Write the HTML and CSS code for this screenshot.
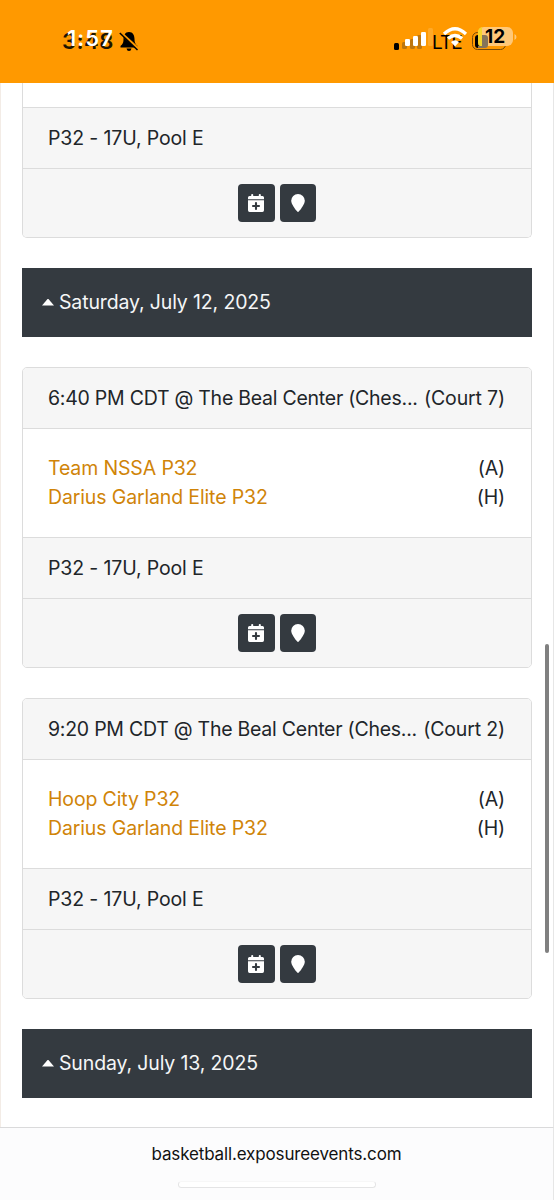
FILE: index.html
```html
<!DOCTYPE html>
<html lang="en">
<head>
<meta charset="utf-8">
<title>Schedule</title>
<link rel="stylesheet" href="styles.css">
</head>
<body>
<svg class="defs" width="0" height="0">
  <symbol id="calendar" viewBox="0 0 16 18">
    <path fill="#fff" d="M3.2 2V.8Q3.2 0 4.2 0t1 .8V2h5.6V.8q0-.8 1-.8t1 .8V2h1.7Q16 2 16 3.500V5.200H0V3.500Q0 2 1.500 2zM0 6.300h16v10Q16 18 14.400 18H1.600Q0 18 0 16.300z"/>
    <path stroke="#343a40" stroke-width="2.100" stroke-linecap="round" d="M8 9v6M5 12h6"/>
  </symbol>
  <symbol id="pin" viewBox="0 0 14 18">
    <path fill="#fff" d="M7 0a6.800 6.800 0 0 1 6.800 6.800C13.800 10 9.700 15.500 7.800 17.600Q7 18.300 6.200 17.600C4.300 15.500.2 10 .2 6.800A6.800 6.800 0 0 1 7 0z"/>
  </symbol>
</svg>
<header class="status">
  <div class="clock"><span class="time-back">3:48</span><span class="time-front">1:57</span></div>
  <svg class="bell" width="20" height="22" viewBox="0 0 20 22">
    <path d="M10 1C6 1 4.500 4.500 4.500 8c0 4-1 5-3 7v1.500h17V15c-2-2-3-3-3-7 0-3.500-1.500-7-5.500-7zM7.500 17.500h5Q12 20 10 20t-2.500-2.500z"/>
    <path d="M2 2 19.500 18" stroke="#f90" stroke-width="3"/>
    <path d="M.8 2 18.500 19" stroke="#000" stroke-width="1.500"/>
  </svg>
  <svg class="signals" width="136" height="30" viewBox="0 0 136 30">
    <g fill="#a86b13" opacity=".75"><rect x="8" y="17" width="5" height="7" rx="1.500"/><rect x="16" y="14" width="5" height="10" rx="1.500"/><rect x="23" y="10" width="5" height="14" rx="1.500"/></g>
    <rect x="0" y="18" width="5" height="7" rx="1.500" fill="#000"/>
    <g fill="#fff"><rect x="11" y="14" width="5" height="7" rx="1.300"/><rect x="19" y="11" width="5" height="10" rx="1.300"/><rect x="27" y="7" width="5" height="14" rx="1.300"/></g>
    <rect x="34" y="3" width="5" height="18" rx="1.500" fill="#ffa927"/>
    <text x="38" y="24" class="lte">LTE</text>
    <g fill="none" stroke="#fff" stroke-width="3.200"><path d="M50 9Q61-1.500 72 9"/><path d="M54 13.500q7-6 14 0"/></g>
    <path fill="#fff" d="m57 17 4 4.500 4-4.500q-4-3.500-8 0z"/>
    <rect x="78.500" y="7.500" width="33" height="17" rx="5" fill="none" stroke="#744b0b"/>
    <path d="M114 13v6q2-1 2-3t-2-3z" fill="#a67016"/>
    <rect x="84" y="2" width="35" height="19" rx="6" fill="#ffc878"/>
    <path d="M120.500 9v6q2-1 2-3t-2-3z" fill="#ffc878"/>
    <path d="M88 10v13h-4q-3 0-3-3v-7q0-3 3-3z"/>
    <path d="M84 7q0-4 4-5v19h-2q-2 0-2-3z" fill="#f4d52c"/>
    <path d="M88 10h3q3 0 3 3v7q0 3-3 3h-7v-2h4z" fill="#85745a"/>
    <text x="91" y="18" class="battery">12</text>
  </svg>
</header>
<main class="list">
  <section class="card card-cut">
    <div class="card-body"></div>
    <div class="card-row">P32 - 17U, Pool E</div>
    <div class="card-actions"><span class="btn"><svg width="16" height="18"><use href="#calendar"/></svg></span><span class="btn btn-pin"><svg width="14" height="18"><use href="#pin"/></svg></span></div>
  </section>
  <h2 class="date"><i class="caret"></i><span>Saturday, July 12, 2025</span></h2>
  <section class="card">
    <div class="card-row card-head"><span class="venue">6:40 PM CDT @ The Beal Center (Ches...</span><span>(Court 7)</span></div>
    <div class="card-body">
      <div class="team"><a>Team NSSA P32</a><span>(A)</span></div>
      <div class="team"><a>Darius Garland Elite P32</a><span>(H)</span></div>
    </div>
    <div class="card-row">P32 - 17U, Pool E</div>
    <div class="card-actions"><span class="btn"><svg width="16" height="18"><use href="#calendar"/></svg></span><span class="btn btn-pin"><svg width="14" height="18"><use href="#pin"/></svg></span></div>
  </section>
  <section class="card">
    <div class="card-row card-head"><span class="venue">9:20 PM CDT @ The Beal Center (Ches...</span><span>(Court 2)</span></div>
    <div class="card-body">
      <div class="team"><a>Hoop City P32</a><span>(A)</span></div>
      <div class="team"><a>Darius Garland Elite P32</a><span>(H)</span></div>
    </div>
    <div class="card-row">P32 - 17U, Pool E</div>
    <div class="card-actions"><span class="btn"><svg width="16" height="18"><use href="#calendar"/></svg></span><span class="btn btn-pin"><svg width="14" height="18"><use href="#pin"/></svg></span></div>
  </section>
  <h2 class="date"><i class="caret"></i><span>Sunday, July 13, 2025</span></h2>
</main>
<footer class="browser-bar">
  <span class="url">basketball.exposureevents.com</span>
  <div class="home"></div>
</footer>
<div class="scrollbar"></div>
</body>
</html>
```
FILE: styles.css
```css
* { box-sizing: border-box; }
body {
  margin: 0;
  width: 554px;
  height: 1200px;
  display: flex;
  flex-direction: column;
  position: relative;
  overflow: hidden;
  background: #fff;
  color: #212529;
  font: 19.5px/30px Inter, "Liberation Sans", sans-serif;
  letter-spacing: -0.14px;
}
.defs { position: absolute; }
.status {
  height: 83px;
  flex: none;
  display: flex;
  background: #f90;
  padding: 0 0 0 62px;
  letter-spacing: 0;
}
.clock {
  position: relative;
  width: 57px;
  font-weight: 600;
  font-size: 22px;
  line-height: 26px;
}
.time-back, .time-front { position: absolute; }
.time-back { left: 0; top: 28px; color: #1c1400; letter-spacing: 0.5px; }
.time-front { left: 5px; top: 25px; color: #fff; letter-spacing: 1px; }
.bell { margin-top: 31px; }
.signals { margin: 25px 0 0 255px; }
.lte { font: 400 19px Inter, sans-serif; letter-spacing: -1px; }
.battery { font: 700 19px Inter, sans-serif; }
.list {
  height: 1044px;
  flex: none;
  padding: 0 21px;
  border-left: 1px solid #f3ece6;
  border-right: 1px solid #e6e6e6;
}
.card {
  height: 301px;
  margin-bottom: 30px;
  border: 1px solid #dcdcdc;
  border-radius: 5px;
  overflow: hidden;
  background: #fff;
}
.card-row {
  height: 61px;
  padding: 15px 26px 0 25px;
  background: #f6f6f6;
  border-top: 1px solid #dcdcdc;
  white-space: nowrap;
}
.card-head {
  display: flex;
  justify-content: space-between;
  border-top: 0;
  height: 60px;
}
.venue { letter-spacing: -0.25px; }
.card-body {
  height: 109px;
  padding: 24px 26px 0 25px;
  border-top: 1px solid #dcdcdc;
}
.team { display: flex; justify-content: space-between; height: 29px; }
.team a { color: #d08408; }
.card-actions {
  height: 70px;
  background: #f6f6f6;
  border-top: 1px solid #dcdcdc;
  padding: 15px 1px 0 0;
  display: flex;
  justify-content: center;
  gap: 5px;
}
.card-cut { height: 155px; border-top: 0; border-radius: 0 0 5px 5px; }
.card-cut .card-body { height: 24px; border: 0; padding: 0; }
.btn {
  width: 38px;
  height: 38px;
  border-radius: 4px;
  background: #343a40;
  display: flex;
  align-items: center;
  justify-content: center;
}
.btn:not(.btn-pin) { width: 37px; padding-right: 1px; }
.btn-pin { width: 36px; }
.date {
  height: 69px;
  margin: 0 0 30px;
  padding: 0 20px 1px;
  display: flex;
  align-items: center;
  gap: 5px;
  background: #343a40;
  color: #f5f6f7;
  font-size: 19.5px;
  font-weight: 400;
}
.caret {
  width: 12px;
  height: 7px;
  background: #fff;
  clip-path: polygon(50% 0, 100% 100%, 0 100%);
}
.browser-bar {
  flex: 1;
  display: flex;
  flex-direction: column;
  align-items: center;
  padding-top: 14px;
  background: #fcfcfd;
  border-top: 1px solid #dadadb;
  border-right: 1px solid #e6e6e6;
}
.url { font-size: 17px; line-height: 24px; color: #111; letter-spacing: -0.14px; }
.home {
  width: 198px;
  height: 7px;
  margin-top: 15px;
  border-radius: 4px;
  background: #fff;
  border: 1px solid #e4e4e5;
  border-top-color: #f7f7f7;
}
.scrollbar {
  position: absolute;
  left: 545px;
  top: 644px;
  width: 4px;
  height: 309px;
  border-radius: 2px;
  background: #808080;
}
```
